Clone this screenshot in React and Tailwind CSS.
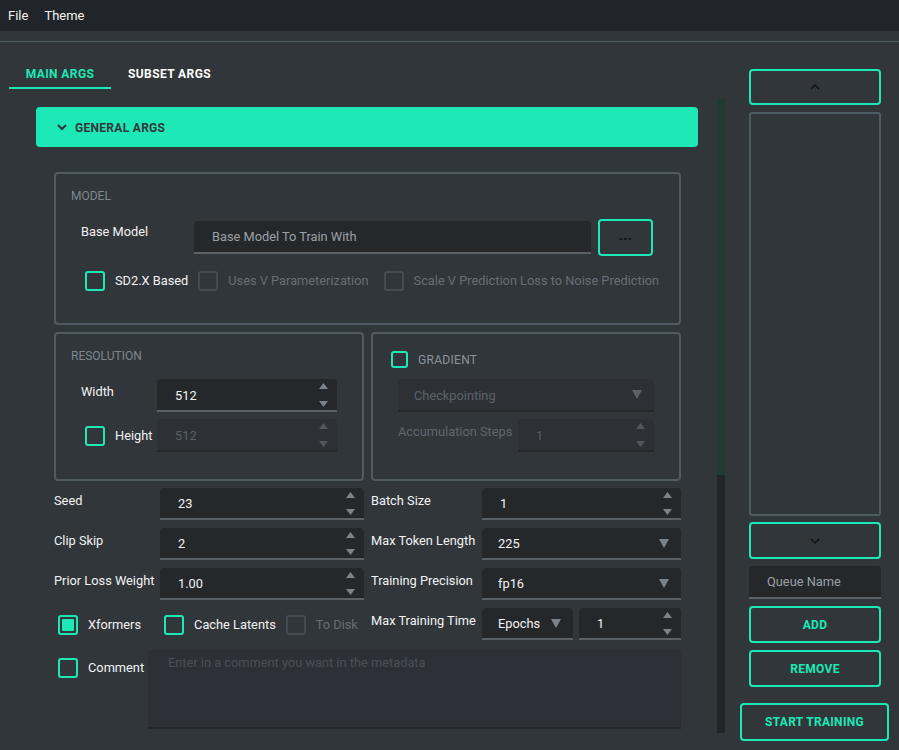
import React from 'react';

function Check({ checked = false, disabled = false, small = false }) {
  const size = small ? 'h-[17px] w-[17px]' : 'h-[20px] w-[20px]';
  const border = disabled ? 'border-[#454c52]' : 'border-[#1de9b6]';
  return (
    <span className={`box-border flex shrink-0 items-center justify-center rounded-[3px] border-2 ${size} ${border}`}>
      {checked && <span className="h-[12px] w-[12px] rounded-[1px] bg-[#1de9b6]" />}
    </span>
  );
}

function Tri({ up, disabled }) {
  const fill = disabled ? '#4f575d' : '#7b838a';
  return (
    <svg width="9" height="6" viewBox="0 0 9 6" className="block">
      {up ? <polygon points="4.5,0 9,6 0,6" fill={fill} /> : <polygon points="0,0 9,0 4.5,6" fill={fill} />}
    </svg>
  );
}

function Spin({ value, w, disabled = false, h = 'h-[32px]' }) {
  const look = disabled
    ? 'bg-[#2d3136] border-[#25282b] text-[#595f65]'
    : 'bg-[#25282b] border-[#5a6268] text-[#f2f2f2]';
  return (
    <div className={`box-border flex shrink-0 items-center rounded-t-[4px] border-b-2 pl-[18px] pr-[9px] text-[12.8px] ${w} ${h} ${look}`}>
      <span className="flex-1 pt-[2px]">{value}</span>
      <div className="flex flex-col justify-between self-stretch pb-[3px] pt-[4px]">
        <Tri up disabled={disabled} />
        <Tri disabled={disabled} />
      </div>
    </div>
  );
}

function Select({ value, w, disabled = false, h = 'h-[32px]', pr = 'pr-[12px]' }) {
  const look = disabled
    ? 'bg-[#2d3136] border-[#25282b] text-[#5b6369]'
    : 'bg-[#25282b] border-[#5a6268] text-[#f2f2f2]';
  return (
    <div className={`box-border flex shrink-0 items-center rounded-t-[4px] border-b-2 pl-[16px] text-[12.8px] ${pr} ${w} ${h} ${look}`}>
      <span className="flex-1 pt-[2px]">{value}</span>
      <svg width="10" height="9" viewBox="0 0 10 9">
        <polygon points="0,0 10,0 5,9" fill={disabled ? '#5a6268' : '#7b838a'} />
      </svg>
    </div>
  );
}

function Group({ children, className = '' }) {
  return (
    <div className={`box-border rounded-[4px] border-2 border-[#4f5b62] ${className}`}>{children}</div>
  );
}

function OutlineButton({ children, className = '' }) {
  return (
    <button className={`box-border flex items-center justify-center rounded-[4px] border-2 border-[#1de9b6] text-[12px] font-bold tracking-[0.3px] text-[#1de9b6] ${className}`}>
      {children}
    </button>
  );
}

function Row({ label, labelW, children }) {
  return (
    <div className="flex h-[32px] items-start">
      <span className={`shrink-0 pt-[3px] text-[12.8px] text-[#f2f2f2] ${labelW}`}>{label}</span>
      {children}
    </div>
  );
}

export default function App() {
  return (
    <div className="flex h-[750px] w-[899px] flex-col overflow-hidden whitespace-nowrap bg-[#31363b] font-['Roboto','Liberation_Sans',sans-serif] text-white">
      {/* menu bar */}
      <div className="flex h-[31px] shrink-0 items-center gap-[16px] bg-[#212428] pl-[8px] text-[13px] text-[#f2f2f2]">
        <span>File</span>
        <span>Theme</span>
      </div>
      <div className="mt-[10px] h-px shrink-0 bg-[#4f5b62]" />

      <div className="flex flex-1">
        {/* left side */}
        <div className="flex w-[740px] shrink-0 flex-col pl-[9px]">
          <div className="mt-[15px] flex h-[32px] text-[12px] font-bold tracking-[0.4px]">
            <div className="box-border flex w-[102px] items-center justify-center border-b-2 border-[#1de9b6] pt-[3px] text-[#1de9b6]">
              MAIN ARGS
            </div>
            <div className="box-border flex w-[117px] items-center justify-center pt-[1px] text-white">
              SUBSET ARGS
            </div>
          </div>

          <div className="mt-[9px] flex h-[635px]">
            <div className="ml-[27px] w-[662px] shrink-0">
              <div className="mt-[9px] flex h-[40px] items-center rounded-[4px] bg-[#1de9b6] pl-[21px] pt-[1px] text-[12px] font-bold tracking-[0.3px] text-[#31363b]">
                <svg width="10" height="7" viewBox="0 0 10 7" className="mr-[8px]">
                  <polyline points="1,1 5,5 9,1" fill="none" stroke="#31363b" strokeWidth="2" />
                </svg>
                GENERAL ARGS
              </div>

              <div className="ml-[18px] mt-[25px] w-[627px]">
                {/* model */}
                <Group className="h-[153px] px-[15px] pt-[15px]">
                  <div className="text-[12px] leading-[14px] text-[#7e878d]">MODEL</div>
                  <div className="mt-[16px] flex items-start">
                    <span className="w-[123px] shrink-0 pl-[10px] pt-[3px] text-[12.8px] text-[#f2f2f2]">Base Model</span>
                    <div className="mt-[2px] box-border flex h-[33px] w-[397px] items-center rounded-t-[4px] border-b-2 border-[#5a6268] bg-[#25282b] pl-[18px] pt-[1px] text-[12.8px] text-[#9aa1a6]">
                      Base Model To Train With
                    </div>
                    <OutlineButton className="ml-[7px] h-[37px] w-[55px] text-[14px]">
                      <span className="-mt-[5px] font-bold text-[#0d0d0d]">...</span>
                    </OutlineButton>
                  </div>
                  <div className="mt-[15px] flex items-center pl-[14px] text-[12.8px]">
                    <Check />
                    <span className="ml-[10px] text-[#f2f2f2]">SD2.X Based</span>
                    <span className="ml-[10px]"><Check disabled /></span>
                    <span className="ml-[10px] text-[#666e74]">Uses V Parameterization</span>
                    <span className="ml-[15px]"><Check disabled /></span>
                    <span className="ml-[10px] text-[#666e74]">Scale V Prediction Loss to Noise Prediction</span>
                  </div>
                </Group>

                {/* resolution + gradient */}
                <div className="mt-[7px] flex gap-[7px]">
                  <Group className="h-[149px] w-[310px] px-[15px] pt-[15px]">
                    <div className="text-[12px] leading-[14px] text-[#7e878d]">RESOLUTION</div>
                    <div className="mt-[16px] flex items-start">
                      <span className="w-[86px] shrink-0 pl-[10px] pt-[3px] text-[12.8px] text-[#f2f2f2]">Width</span>
                      <Spin value="512" w="w-[180px]" h="h-[33px]" />
                    </div>
                    <div className="mt-[7px] flex items-center">
                      <span className="w-[86px] shrink-0 pl-[14px]">
                        <span className="flex items-center">
                          <Check />
                          <span className="ml-[10px] text-[12.8px] text-[#f2f2f2]">Height</span>
                        </span>
                      </span>
                      <Spin value="512" w="w-[180px]" h="h-[33px]" disabled />
                    </div>
                  </Group>
                  <Group className="h-[149px] w-[310px] pl-[18px] pt-[16px]">
                    <div className="flex items-center">
                      <Check small />
                      <span className="ml-[10px] pt-[1px] text-[12px] tracking-[0.3px] text-[#8b9399]">GRADIENT</span>
                    </div>
                    <div className="ml-[7px] mt-[10px]">
                      <Select value="Checkpointing" w="w-[256px]" h="h-[33px]" disabled />
                      <div className="mt-[7px] flex items-start">
                        <span className="w-[120px] shrink-0 pt-[3px] text-[12.8px] text-[#5f676d]">Accumulation Steps</span>
                        <Spin value="1" w="w-[136px]" h="h-[33px]" disabled />
                      </div>
                    </div>
                  </Group>
                </div>

                {/* rows */}
                <div className="mt-[7px] flex gap-[7px]">
                  <div className="flex w-[310px] flex-col gap-[8px]">
                    <Row label="Seed" labelW="w-[106px]"><Spin value="23" w="w-[204px]" /></Row>
                    <Row label="Clip Skip" labelW="w-[106px]"><Spin value="2" w="w-[204px]" /></Row>
                    <Row label="Prior Loss Weight" labelW="w-[106px]"><Spin value="1.00" w="w-[204px]" /></Row>
                    <div className="flex h-[32px] items-center pl-[4px] pt-[2px] text-[12.8px]">
                      <Check checked />
                      <span className="ml-[10px] text-[#f2f2f2]">Xformers</span>
                      <span className="ml-[23px]"><Check /></span>
                      <span className="ml-[10px] text-[#f2f2f2]">Cache Latents</span>
                      <span className="ml-[10px]"><Check disabled /></span>
                      <span className="ml-[10px] text-[#666e74]">To Disk</span>
                    </div>
                  </div>
                  <div className="flex w-[310px] flex-col gap-[8px]">
                    <Row label="Batch Size" labelW="w-[111px]"><Spin value="1" w="w-[199px]" /></Row>
                    <Row label="Max Token Length" labelW="w-[111px]"><Select value="225" w="w-[199px]" /></Row>
                    <Row label="Training Precision" labelW="w-[111px]"><Select value="fp16" w="w-[199px]" /></Row>
                    <Row label="Max Training Time" labelW="w-[111px]">
                      <Select value="Epochs" w="w-[91px]" pr="pr-[12px]" />
                      <span className="ml-[6px]"><Spin value="1" w="w-[102px]" /></span>
                    </Row>
                  </div>
                </div>

                {/* comment */}
                <div className="mt-[10px] flex items-start">
                  <div className="flex w-[94px] shrink-0 items-center pl-[4px] pt-[8px]">
                    <Check />
                    <span className="ml-[10px] text-[12.8px] text-[#f2f2f2]">Comment</span>
                  </div>
                  <div className="box-border h-[79px] flex-1 rounded-t-[4px] border-b-2 border-[#25282b] bg-[#2d3137] pl-[20px] pt-[3px] text-[12.8px] text-[#4a5055]">
                    Enter in a comment you want in the metadata
                  </div>
                </div>
              </div>
            </div>

            {/* scrollbar */}
            <div className="ml-[19px] flex w-[8px] flex-col bg-[#232629]">
              <div className="h-[377px] bg-[#1f3b34]" />
            </div>
          </div>
        </div>

        {/* right side */}
        <div className="flex w-[159px] shrink-0 flex-col">
          <div className="ml-[9px] mt-[27px] flex w-[132px] flex-col">
            <OutlineButton className="h-[36px]">
              <svg width="10" height="6" viewBox="0 0 10 6"><polyline points="1,5 5,1 9,5" fill="none" stroke="#111" strokeWidth="1.5" /></svg>
            </OutlineButton>
            <div className="mt-[7px] box-border h-[404px] rounded-[3px] border-2 border-[#4f5b62]" />
            <OutlineButton className="mt-[6px] h-[37px]">
              <svg width="10" height="6" viewBox="0 0 10 6"><polyline points="1,1 5,5 9,1" fill="none" stroke="#111" strokeWidth="1.5" /></svg>
            </OutlineButton>
            <div className="mt-[7px] box-border flex h-[33px] items-center rounded-t-[4px] border-b-2 border-[#5a6268] bg-[#25282b] pl-[18px] pt-[1px] text-[12.8px] text-[#9aa1a6]">
              Queue Name
            </div>
            <OutlineButton className="mt-[7px] h-[37px]">ADD</OutlineButton>
            <OutlineButton className="mt-[7px] h-[37px]">REMOVE</OutlineButton>
          </div>
          <OutlineButton className="mt-[16px] h-[38px] w-[149px]">START TRAINING</OutlineButton>
        </div>
      </div>
    </div>
  );
}
